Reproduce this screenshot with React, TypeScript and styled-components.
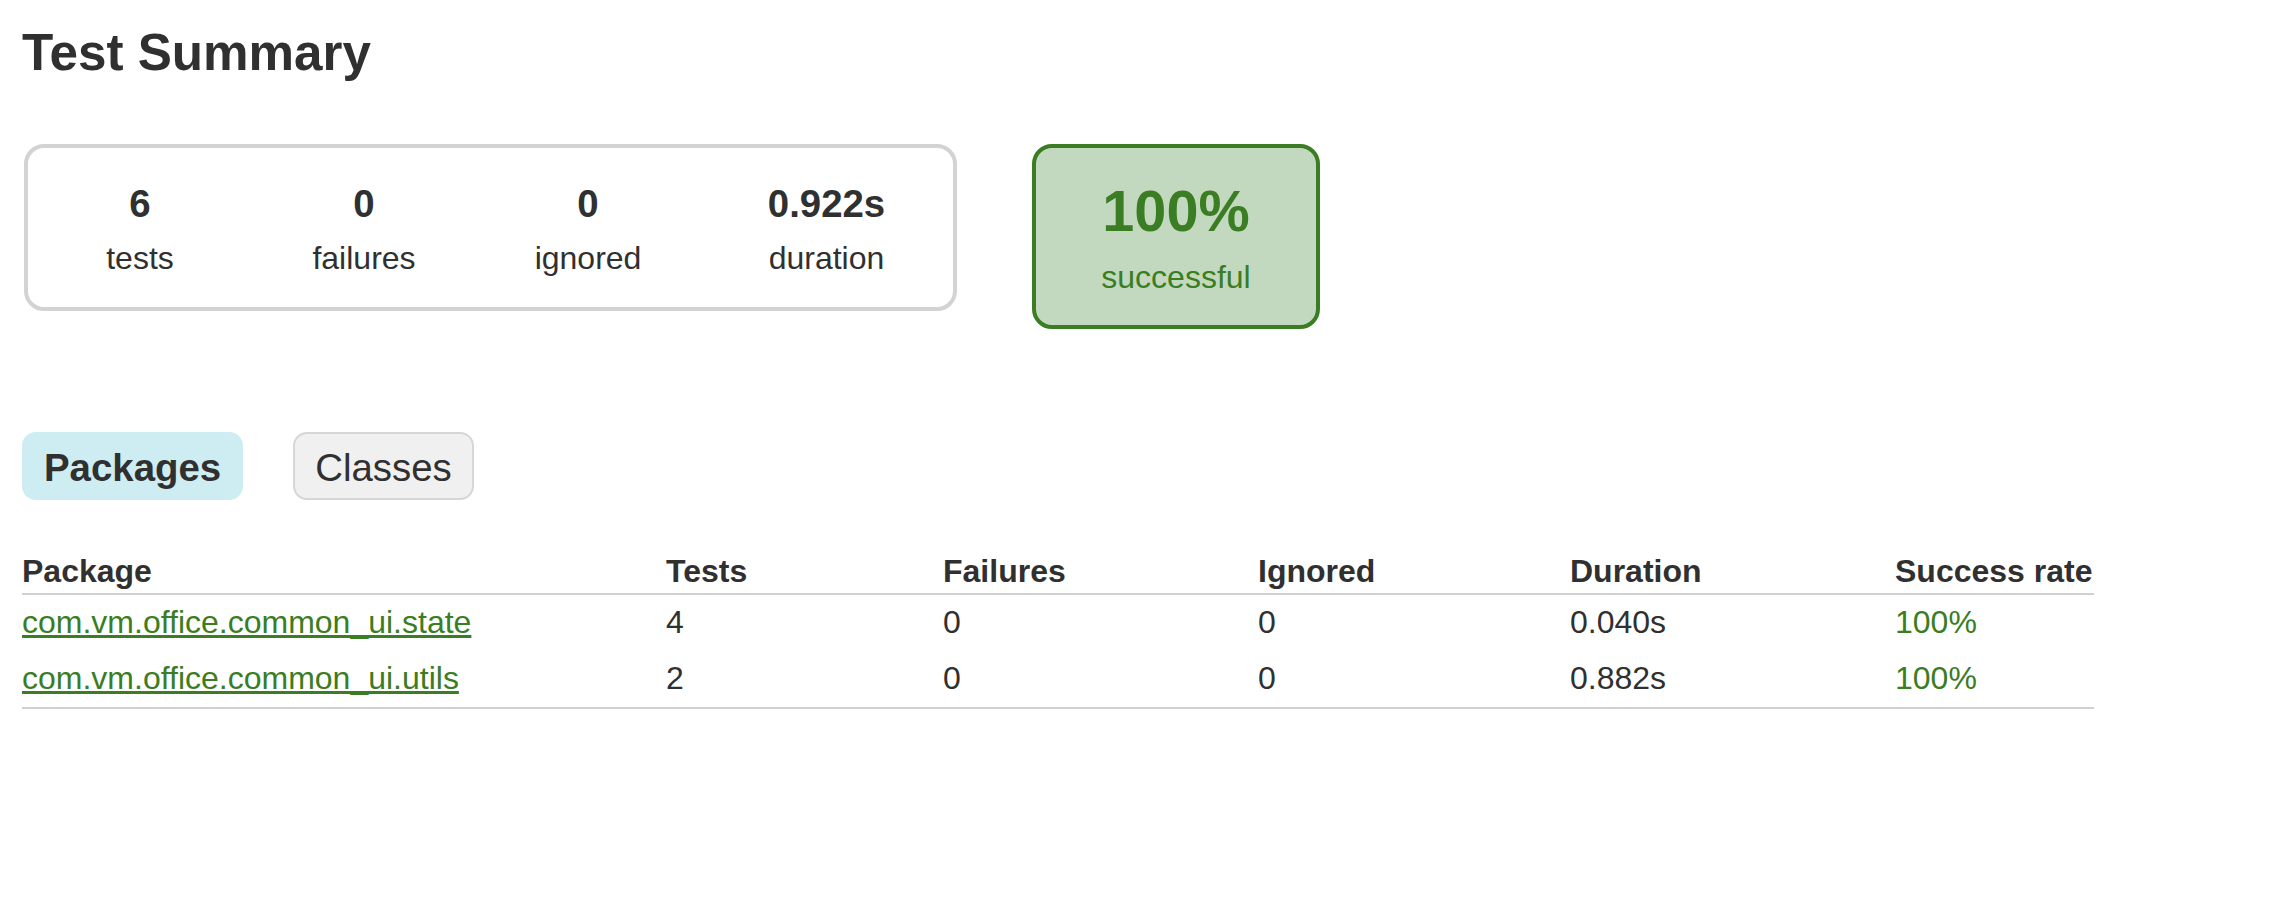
import React from "react";
import styled, { createGlobalStyle } from "styled-components";

const GlobalStyle = createGlobalStyle`
  html, body {
    margin: 0;
    padding: 0;
    background: #ffffff;
  }
  body {
    font-family: "Liberation Sans", Arial, Helvetica, sans-serif;
    font-size: 32px;
    color: #303030;
  }
`;

const green = "#3a7d22";

const Page = styled.div`
  padding: 23px 22px 40px 22px;
`;

const Title = styled.h1`
  margin: 0;
  font-size: 51.2px;
  font-weight: bold;
  line-height: normal;
  color: #303030;
`;

const SummaryRow = styled.div`
  display: flex;
  align-items: flex-start;
  margin-top: 62px;
`;

const SummaryGroup = styled.div`
  display: flex;
  margin-left: 2px;
  border: 4px solid #d3d3d3;
  border-radius: 20px;
  width: 925px;
`;

const InfoBox = styled.div<{ $w: number }>`
  width: ${(p) => p.$w}px;
  padding: 34px 0 30px;
  text-align: center;
`;

const Counter = styled.div`
  font-size: 38.4px;
  font-weight: bold;
  line-height: normal;
  margin-bottom: 14px;
`;

const Label = styled.div`
  font-size: 32px;
  line-height: normal;
`;

const SuccessBox = styled.div`
  margin-left: 75px;
  width: 280px;
  padding: 30px 0 29px;
  border: 4px solid ${green};
  border-radius: 20px;
  background: #c3d9bf;
  color: ${green};
  text-align: center;
`;

const Percent = styled.div`
  font-size: 57.6px;
  font-weight: bold;
  line-height: normal;
  margin-bottom: 15px;
`;

const Tabs = styled.ul`
  display: flex;
  list-style: none;
  margin: 103px 0 0 0;
  padding: 0;
`;

const Tab = styled.li<{ $selected?: boolean }>`
  padding: 12px 20px 8px;
  margin-right: 50px;
  border-radius: 14px;
  border: 2px solid ${(p) => (p.$selected ? "#ceedf2" : "#d6d6d6")};
  background: ${(p) => (p.$selected ? "#ceedf2" : "#f0f0f0")};
  font-size: 38.4px;
  line-height: normal;
  font-weight: ${(p) => (p.$selected ? "bold" : "normal")};
  color: #303030;
`;

const Table = styled.div`
  margin-top: 48px;
  width: 2072px;
  display: grid;
  grid-template-columns: 644px 277px 315px 312px 325px 199px;
  border-bottom: 2px solid #d0d0d0;
`;

const HeadCell = styled.div`
  padding: 5px 0 3px;
  font-weight: bold;
  line-height: normal;
  border-bottom: 2px solid #d0d0d0;
  white-space: nowrap;
`;

const Cell = styled.div<{ $green?: boolean }>`
  padding: 9px 0 10px;
  line-height: normal;
  white-space: nowrap;
  color: ${(p) => (p.$green ? green : "#303030")};
`;

const PkgLink = styled.a`
  color: ${green};
  text-decoration: underline;
`;

const rows = [
  { name: "com.vm.office.common_ui.state", tests: "4", failures: "0", ignored: "0", duration: "0.040s", rate: "100%" },
  { name: "com.vm.office.common_ui.utils", tests: "2", failures: "0", ignored: "0", duration: "0.882s", rate: "100%" },
];

export default function App() {
  return (
    <Page>
      <GlobalStyle />
      <Title>Test Summary</Title>
      <SummaryRow>
        <SummaryGroup>
          <InfoBox $w={224}>
            <Counter>6</Counter>
            <Label>tests</Label>
          </InfoBox>
          <InfoBox $w={224}>
            <Counter>0</Counter>
            <Label>failures</Label>
          </InfoBox>
          <InfoBox $w={224}>
            <Counter>0</Counter>
            <Label>ignored</Label>
          </InfoBox>
          <InfoBox $w={253}>
            <Counter>0.922s</Counter>
            <Label>duration</Label>
          </InfoBox>
        </SummaryGroup>
        <SuccessBox>
          <Percent>100%</Percent>
          <Label>successful</Label>
        </SuccessBox>
      </SummaryRow>
      <Tabs>
        <Tab $selected>Packages</Tab>
        <Tab>Classes</Tab>
      </Tabs>
      <Table>
        <HeadCell>Package</HeadCell>
        <HeadCell>Tests</HeadCell>
        <HeadCell>Failures</HeadCell>
        <HeadCell>Ignored</HeadCell>
        <HeadCell>Duration</HeadCell>
        <HeadCell>Success rate</HeadCell>
        {rows.map((r) => (
          <React.Fragment key={r.name}>
            <Cell>
              <PkgLink href="#">{r.name}</PkgLink>
            </Cell>
            <Cell>{r.tests}</Cell>
            <Cell>{r.failures}</Cell>
            <Cell>{r.ignored}</Cell>
            <Cell>{r.duration}</Cell>
            <Cell $green>{r.rate}</Cell>
          </React.Fragment>
        ))}
      </Table>
    </Page>
  );
}
